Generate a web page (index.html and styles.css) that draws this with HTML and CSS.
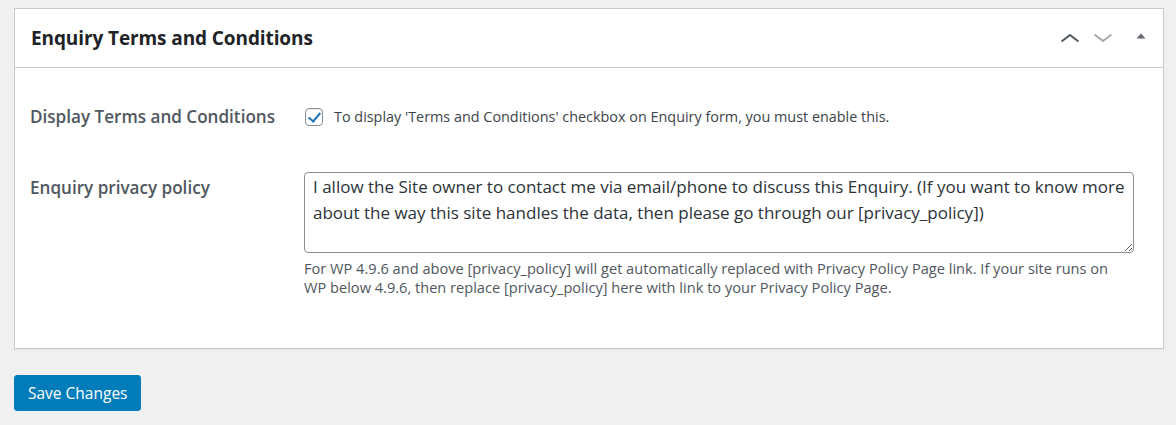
FILE: index.html
```html
<!DOCTYPE html>
<html lang="en">
<head>
<meta charset="utf-8">
<title>Enquiry Terms and Conditions</title>
<link rel="stylesheet" href="styles.css">
</head>
<body>
<div class="postbox">
  <div class="postbox-header">
    <h2 class="hndle">Enquiry Terms and Conditions</h2>
    <div class="handle-actions">
      <button type="button" class="handle-btn up" aria-label="Move up">
        <svg width="20" height="10" viewBox="0 0 20 10"><path d="M1.5 8.5 L10 2 L18.5 8.5" fill="none" stroke="currentColor" stroke-width="2"/></svg>
      </button>
      <button type="button" class="handle-btn down" aria-label="Move down">
        <svg width="20" height="10" viewBox="0 0 20 10"><path d="M1.5 1.5 L10 8 L18.5 1.5" fill="none" stroke="currentColor" stroke-width="2"/></svg>
      </button>
      <button type="button" class="handle-btn toggle" aria-label="Toggle panel">
        <svg width="10" height="6" viewBox="0 0 10 6"><path d="M0.5 5.5 L5 0.5 L9.5 5.5 Z" fill="currentColor"/></svg>
      </button>
    </div>
  </div>
  <div class="inside">
    <div class="form-row row-check">
      <div class="row-label">Display Terms and Conditions</div>
      <div class="row-field check-field">
        <input type="checkbox" class="cb" id="display-tc" checked>
        <label for="display-tc" class="cb-text">To display 'Terms and Conditions' checkbox on Enquiry form, you must enable this.</label>
      </div>
    </div>
    <div class="form-row row-policy">
      <div class="row-label label-policy">Enquiry privacy policy</div>
      <div class="row-field">
        <textarea class="policy-text" rows="3">I allow the Site owner to contact me via email/phone to discuss this Enquiry. (If you want to know more about the way this site handles the data, then please go through our [privacy_policy])</textarea>
        <p class="description">For WP 4.9.6 and above [privacy_policy] will get automatically replaced with Privacy Policy Page link. If your site runs on<br>WP below 4.9.6, then replace [privacy_policy] here with link to your Privacy Policy Page.</p>
      </div>
    </div>
  </div>
</div>
<div class="submit">
  <button type="button" class="button-primary">Save Changes</button>
</div>
</body>
</html>
```
FILE: styles.css
```css
html, body {
  margin: 0;
  padding: 0;
}
body {
  background: #f0f0f1;
  font-family: "Open Sans", "Noto Sans", sans-serif;
  color: #3c434a;
  padding: 8px 12px 0 14px;
}
.postbox {
  background: #fff;
  border: 1px solid #c9cacc;
  box-shadow: 0 1px 1px rgba(0,0,0,0.04);
}
.postbox-header {
  display: flex;
  align-items: center;
  justify-content: space-between;
  height: 58px;
  border-bottom: 1px solid #c9cacc;
}
.hndle {
  margin: 0;
  padding-left: 16px;
  font-size: 19px;
  line-height: 28px;
  font-weight: 700;
  color: #1d2327;
  letter-spacing: -0.1px;
}
.handle-actions {
  display: flex;
  align-items: center;
  height: 100%;
}
.handle-btn {
  display: flex;
  align-items: center;
  justify-content: center;
  height: 100%;
  width: 33px;
  padding: 0;
  border: 0;
  background: none;
  cursor: pointer;
}
.handle-btn.up { color: #50575e; }
.handle-btn.down { color: #a7aaad; }
.handle-btn.toggle {
  width: 44px;
  color: #646970;
  padding-bottom: 4px;
}
.inside {
  padding: 40px 29px 51px 15px;
}
.form-row {
  display: grid;
  grid-template-columns: 274px 1fr;
}
.row-label {
  font-size: 17.1px;
  font-weight: 600;
  color: #50575e;
  line-height: 18px;
}
.row-check {
  align-items: center;
}
.check-field {
  display: flex;
  align-items: center;
}
.cb {
  -webkit-appearance: none;
  appearance: none;
  position: relative;
  width: 18px;
  height: 18px;
  margin: 0 11px 0 1px;
  border: 1px solid #8c8f94;
  border-radius: 4px;
  background: #fff;
  box-shadow: inset 0 1px 2px rgba(0,0,0,0.1);
}
.cb:checked::before {
  content: "";
  position: absolute;
  left: 5px;
  top: 1px;
  width: 5px;
  height: 10px;
  border-right: 2.5px solid #2271b1;
  border-bottom: 2.5px solid #2271b1;
  transform: rotate(40deg);
}
.cb-text {
  font-size: 14.4px;
  line-height: 18px;
  color: #3c434a;
}
.row-policy {
  margin-top: 46px;
}
.label-policy {
  line-height: 26px;
  padding-top: 3px;
}
.policy-text {
  display: block;
  box-sizing: border-box;
  width: 100%;
  height: 81px;
  margin: 0;
  padding: 1px 8px;
  border: 1px solid #8c8f94;
  border-radius: 4px;
  font-family: "Open Sans", "Noto Sans", sans-serif;
  font-size: 17px;
  line-height: 26px;
  color: #2c3338;
  resize: vertical;
}
.description {
  margin: 6px 0 0;
  font-size: 14.6px;
  line-height: 19px;
  color: #50575e;
  white-space: nowrap;
}
.submit {
  margin-top: 26px;
}
.button-primary {
  height: 36px;
  padding: 0 13px;
  border: 1px solid #007cba;
  border-radius: 3px;
  background: #007cba;
  color: #fff;
  font-family: "Open Sans", "Noto Sans", sans-serif;
  font-size: 15.5px;
  cursor: pointer;
}
```
